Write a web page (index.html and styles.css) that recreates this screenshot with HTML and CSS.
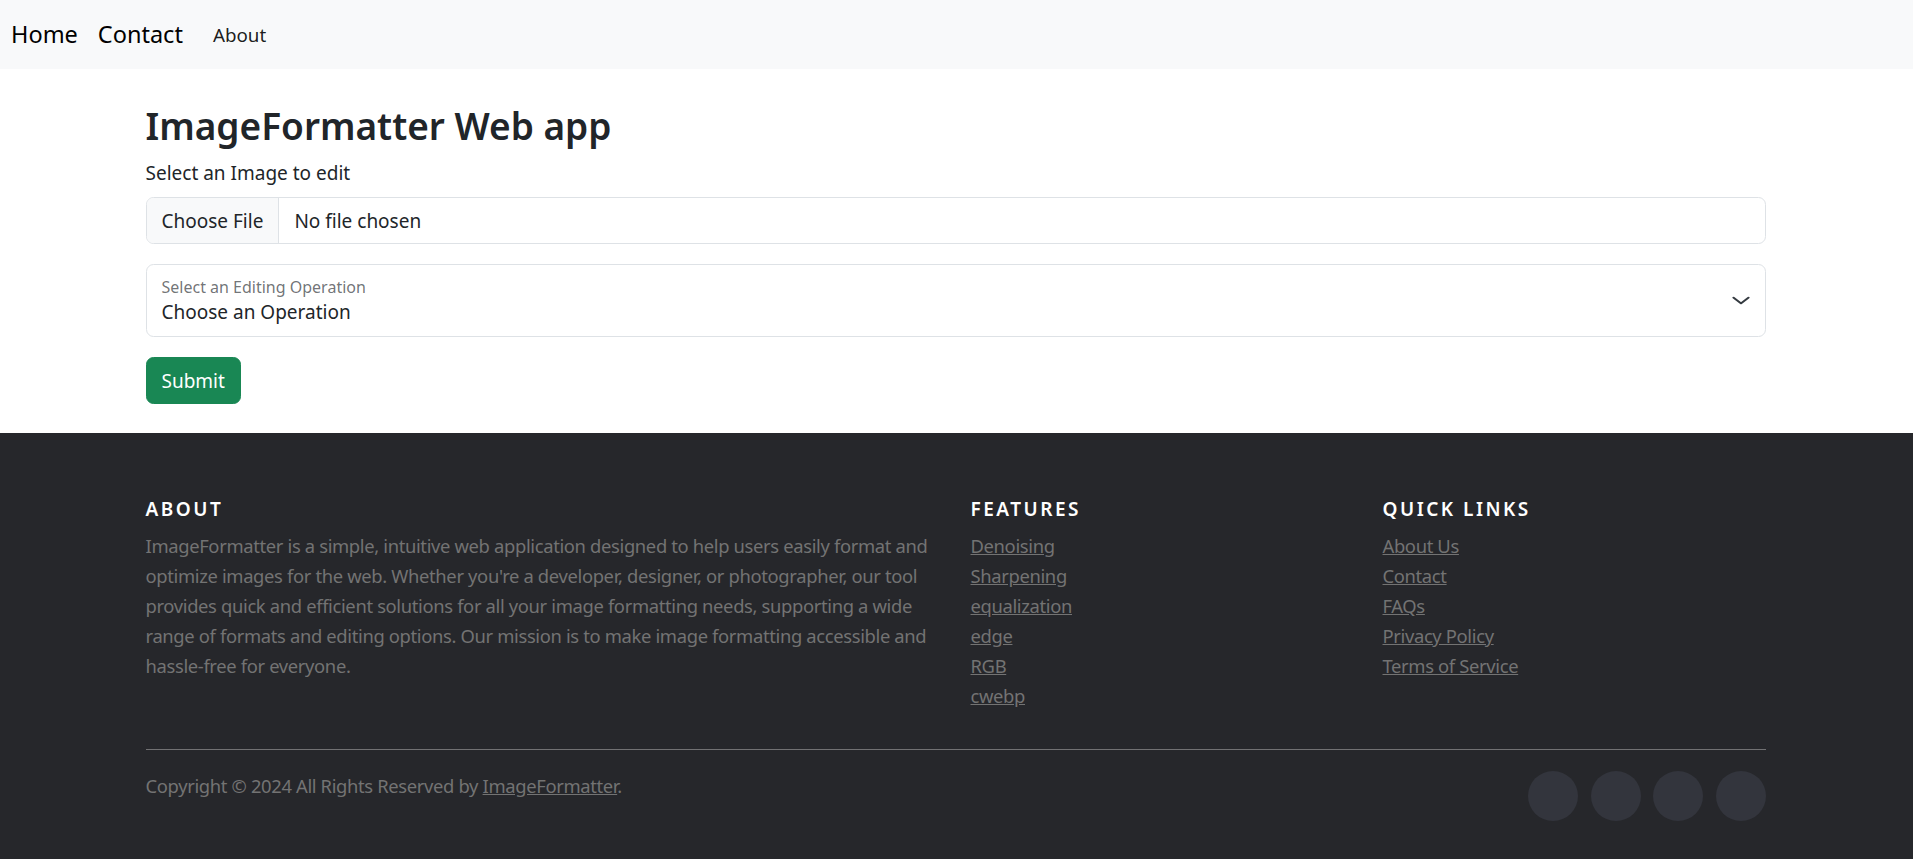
FILE: index.html
```html
<!DOCTYPE html>
<html lang="en">
<head>
<meta charset="utf-8">
<title>ImageFormatter Web app</title>
<link rel="stylesheet" href="styles.css">
</head>
<body>
<nav class="navbar">
  <a class="brand" href="#">Home</a>
  <a class="brand" href="#">Contact</a>
  <a class="nav-link" href="#">About</a>
</nav>

<main class="container page">
  <h1 class="title">ImageFormatter Web app</h1>
  <form class="edit-form">
    <label class="form-label" for="file">Select an Image to edit</label>
    <input class="form-control" type="file" id="file">
    <div class="form-floating">
      <select class="form-select" id="op">
        <option>Choose an Operation</option>
        <option>Denoising</option>
        <option>Sharpening</option>
      </select>
      <label class="floating-label" for="op">Select an Editing Operation</label>
      <svg class="chevron" viewBox="0 0 16 16" width="20" height="15" preserveAspectRatio="none" aria-hidden="true"><path d="m2 5 6 6 6-6" fill="none" stroke="#343a40" stroke-width="1.8" stroke-linecap="round" stroke-linejoin="round"/></svg>
    </div>
    <button class="btn-submit" type="button">Submit</button>
  </form>
</main>

<footer class="site-footer">
  <div class="container">
    <div class="footer-row">
      <div class="col-about">
        <h6>About</h6>
        <p class="about-text">ImageFormatter is a simple, intuitive web application designed to help users easily format and optimize images for the web. Whether you're a developer, designer, or photographer, our tool provides quick and efficient solutions for all your image formatting needs, supporting a wide range of formats and editing options. Our mission is to make image formatting accessible and hassle-free for everyone.</p>
      </div>
      <div class="col-features">
        <h6>Features</h6>
        <ul class="footer-links">
          <li><a href="#">Denoising</a></li>
          <li><a href="#">Sharpening</a></li>
          <li><a href="#">equalization</a></li>
          <li><a href="#">edge</a></li>
          <li><a href="#">RGB</a></li>
          <li><a href="#">cwebp</a></li>
        </ul>
      </div>
      <div class="col-links">
        <h6>Quick Links</h6>
        <ul class="footer-links">
          <li><a href="#">About Us</a></li>
          <li><a href="#">Contact</a></li>
          <li><a href="#">FAQs</a></li>
          <li><a href="#">Privacy Policy</a></li>
          <li><a href="#">Terms of Service</a></li>
        </ul>
      </div>
    </div>
    <hr class="footer-rule">
    <div class="bottom-row">
      <p class="copyright-text">Copyright &copy; 2024 All Rights Reserved by <a href="#">ImageFormatter</a>.</p>
      <ul class="social-icons">
        <li><a href="#" aria-label="facebook"></a></li>
        <li><a href="#" aria-label="twitter"></a></li>
        <li><a href="#" aria-label="dribbble"></a></li>
        <li><a href="#" aria-label="linkedin"></a></li>
      </ul>
    </div>
  </div>
</footer>
</body>
</html>
```

FILE: styles.css
```css
* { box-sizing: border-box; }

html, body {
  margin: 0;
  padding: 0;
}

body {
  font-family: "Noto Sans", "Open Sans", sans-serif;
  font-size: 19px;
  line-height: 30px;
  color: #212529;
  background: #fff;
}

a { color: inherit; }

.navbar {
  height: 69px;
  background: #f8f9fa;
  display: flex;
  align-items: center;
  padding-left: 11px;
}

.brand {
  font-size: 23.5px;
  color: #000;
  text-decoration: none;
  margin-right: 20px;
  line-height: 1.5;
}

.nav-link {
  font-size: 18.8px;
  color: rgba(0, 0, 0, 0.9);
  text-decoration: none;
  padding: 10px;
}

.container {
  width: 1650px;
  max-width: 100%;
  margin: 0 auto;
  padding: 0 16px 0 14px;
}

.page {
  padding-top: 35px;
  padding-bottom: 29px;
}

.title {
  margin: 0 0 10px;
  font-size: 37px;
  font-weight: 600;
  line-height: 1.2;
}

.edit-form {
  display: flex;
  flex-direction: column;
  align-items: flex-start;
}

.form-label {
  display: block;
  margin-bottom: 9px;
}

.form-control {
  display: block;
  width: 100%;
  height: 47px;
  padding: 7.5px 15px;
  font: inherit;
  color: #212529;
  background: #fff;
  border: 1px solid #dee2e6;
  border-radius: 7.5px;
  margin-bottom: 20px;
  overflow: hidden;
}

.form-control::file-selector-button {
  font: inherit;
  color: #212529;
  height: 45px;
  padding: 0 15px;
  margin: -7.5px 15px -7.5px -15px;
  background: #f8f9fa;
  border: 0;
  border-right: 1px solid #dee2e6;
  border-radius: 0;
}

.form-floating {
  position: relative;
  width: 100%;
  margin-bottom: 20px;
}

.form-select {
  display: block;
  width: 100%;
  height: 73px;
  padding: 32px 56px 9px 15px;
  font: inherit;
  color: #212529;
  background: #fff;
  border: 1px solid #dee2e6;
  border-radius: 7.5px;
  appearance: none;
  -webkit-appearance: none;
}

.floating-label {
  position: absolute;
  top: 11px;
  left: 16px;
  font-size: 16px;
  line-height: 1.5;
  color: rgba(33, 37, 41, 0.65);
  pointer-events: none;
}

.chevron {
  position: absolute;
  right: 15px;
  top: 29px;
  pointer-events: none;
}

.btn-submit {
  font: inherit;
  color: #fff;
  background: #198754;
  border: 1px solid #198754;
  border-radius: 7.5px;
  height: 47px;
  padding: 0 15px;
}

/* footer */
.site-footer {
  background: #26272b;
  color: #737373;
  padding: 59px 0 80px;
  font-size: 18.4px;
  line-height: 30px;
}

.site-footer h6 {
  margin: 6px 0 10px;
  color: #fff;
  font-size: 19px;
  font-weight: 600;
  line-height: 1.2;
  text-transform: uppercase;
  letter-spacing: 2.5px;
}

.footer-row {
  display: grid;
  grid-template-columns: 825px 412px 1fr;
}

.about-text,
.footer-links,
.copyright-text {
  letter-spacing: -0.35px;
}

.about-text {
  margin: 0 0 20px;
  width: 795px;
}

.footer-links {
  list-style: none;
  margin: 0 0 20px;
  padding: 0;
}

.footer-links a,
.copyright-text a {
  color: #737373;
}

.footer-rule {
  margin: 18px 0 21px;
  border: 0;
  border-top: 1px solid rgba(187, 187, 187, 0.5);
}

.bottom-row {
  display: flex;
  justify-content: space-between;
  align-items: flex-start;
}

.copyright-text {
  margin: 0;
}

.social-icons {
  display: flex;
  gap: 12.5px;
  list-style: none;
  margin: 0;
  padding: 0;
}

.social-icons a {
  display: block;
  width: 50px;
  height: 50px;
  border-radius: 50%;
  background: #33353d;
}
```
